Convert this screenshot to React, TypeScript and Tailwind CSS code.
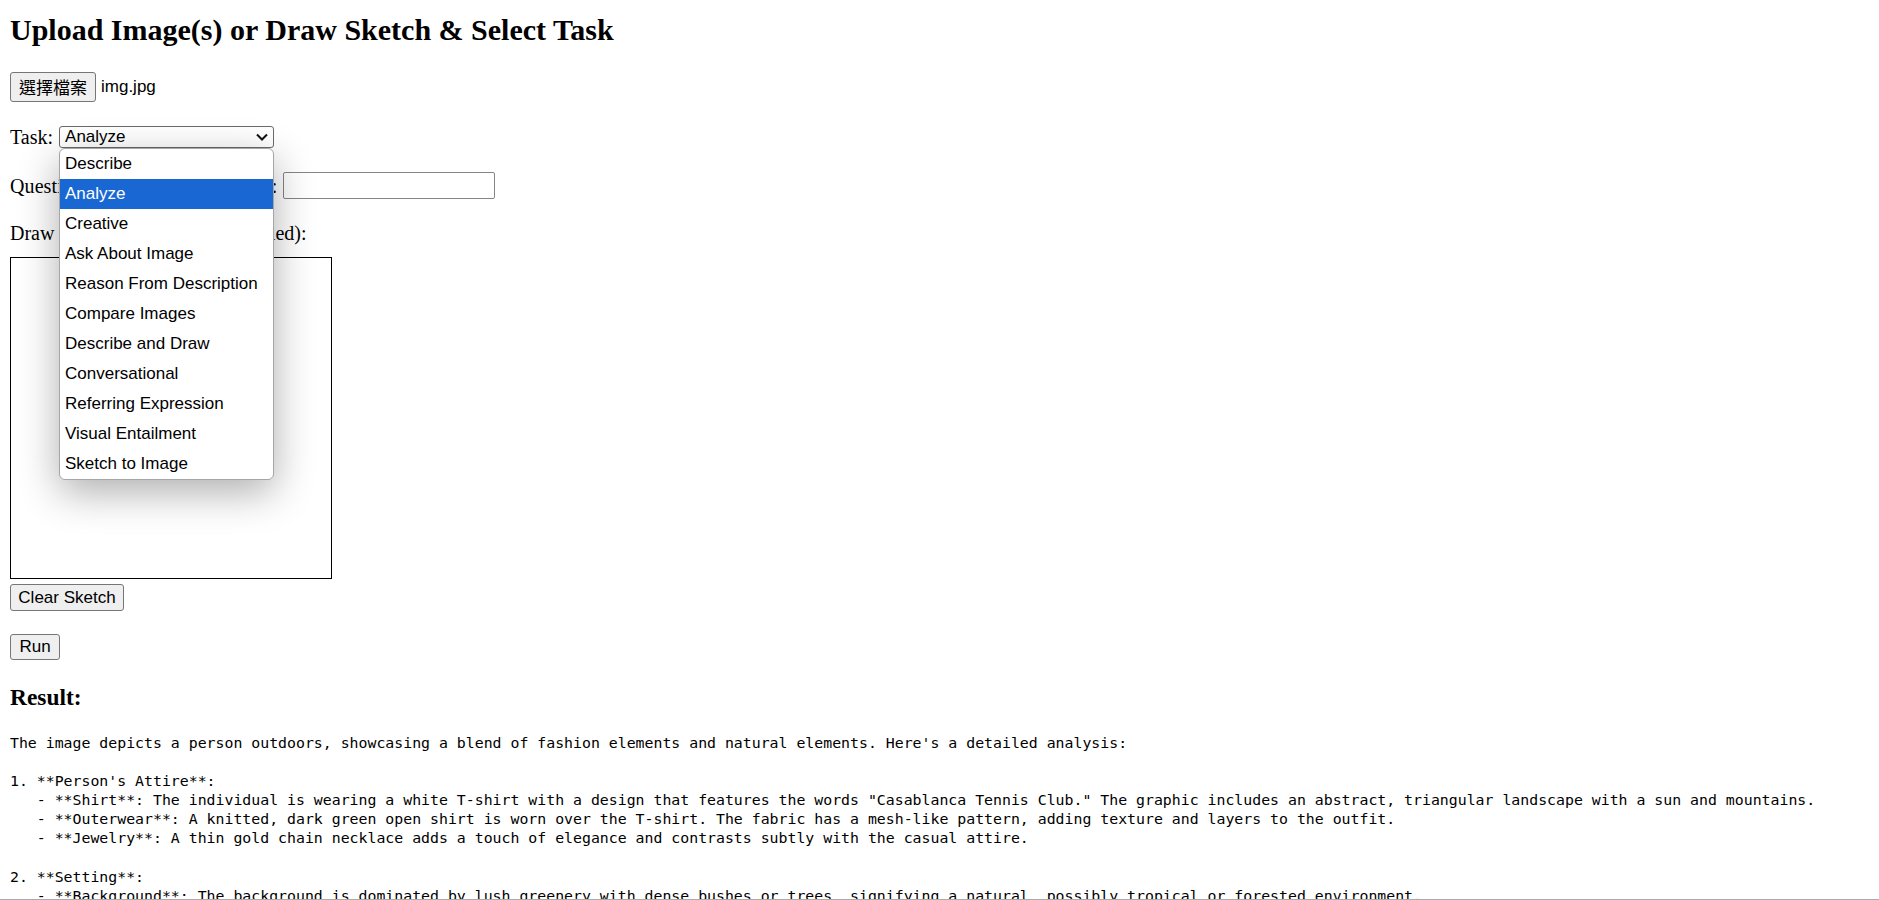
const taskOptions = [
  "Describe",
  "Analyze",
  "Creative",
  "Ask About Image",
  "Reason From Description",
  "Compare Images",
  "Describe and Draw",
  "Conversational",
  "Referring Expression",
  "Visual Entailment",
  "Sketch to Image",
];

const result = `The image depicts a person outdoors, showcasing a blend of fashion elements and natural elements. Here's a detailed analysis:

1. **Person's Attire**:
   - **Shirt**: The individual is wearing a white T-shirt with a design that features the words "Casablanca Tennis Club." The graphic includes an abstract, triangular landscape with a sun and mountains.
   - **Outerwear**: A knitted, dark green open shirt is worn over the T-shirt. The fabric has a mesh-like pattern, adding texture and layers to the outfit.
   - **Jewelry**: A thin gold chain necklace adds a touch of elegance and contrasts subtly with the casual attire.

2. **Setting**:
   - **Background**: The background is dominated by lush greenery with dense bushes or trees, signifying a natural, possibly tropical or forested environment.
   - **Lighting**: The lighting appears to be natural daylight, suggesting the photo was taken during the day.`;

const serif = "font-['Liberation_Serif','Times_New_Roman',serif]";
const sans = "font-['Liberation_Sans',Arial,sans-serif]";

function NativeButton({ label, width, height }: { label: string; width: string; height: string }) {
  return (
    <div
      className={`${width} ${height} flex items-center justify-center bg-[#efefef] border border-[#767676] rounded-[3px] text-[17px] text-black ${sans}`}
    >
      {label}
    </div>
  );
}

export default function App() {
  const selected = "Analyze";

  return (
    <div className={`relative h-[900px] overflow-hidden border-b border-[#ababab] bg-white px-[10px] text-black ${serif}`}>
      <h2 className="mt-[13px] text-[30px] leading-[34px] font-bold">
        Upload Image(s) or Draw Sketch &amp; Select Task
      </h2>

      <div className="mt-[25px] flex h-[30px] items-center gap-[5px]">
        <div className="flex h-[30px] w-[86px] items-center justify-center rounded-[3px] border border-[#767676] bg-[#efefef] text-[17px] font-['Noto_Sans_CJK_TC',sans-serif]">
          選擇檔案
        </div>
        <span className={`text-[17px] ${sans}`}>img.jpg</span>
      </div>

      <div className="mt-[24px] flex h-[22px] items-center">
        <span className="text-[20px] leading-[22px]">Task:</span>
        <div
          className={`ml-[6px] flex h-[22px] w-[215px] items-center justify-between rounded-[3px] border border-[#6b6b6b] pl-[5px] pr-[4px] text-[17px] ${sans}`}
        >
          <span>{selected}</span>
          <svg width="12" height="8" viewBox="0 0 12 8" className="mr-[1px]">
            <polyline points="1,1.5 6,6.5 11,1.5" fill="none" stroke="#111" strokeWidth="2" />
          </svg>
        </div>
      </div>

      <div className="mt-[24px] flex h-[27px] items-center gap-[5px]">
        <span className="text-[20px] leading-[22px] tracking-[0.1px]">Question (for Ask About Image):</span>
        <div className="h-[27px] w-[212px] rounded-[2px] border border-[#858585] bg-white" />
      </div>

      <p className="mt-[23px] text-[20px] leading-[22px]">Draw a Sketch (optional, if enabled):</p>

      <div className="mt-[13px] h-[322px] w-[322px] border border-black bg-white" />

      <div className="mt-[5px]">
        <NativeButton label="Clear Sketch" width="w-[114px]" height="h-[27px]" />
      </div>

      <div className="mt-[23px]">
        <NativeButton label="Run" width="w-[50px]" height="h-[26px]" />
      </div>

      <h3 className="mt-[23.6px] text-[23.4px] leading-[27px] font-bold">Result:</h3>

      <pre className="mt-[23.4px] whitespace-pre text-[14.85px] leading-[19.1px] font-['DejaVu_Sans_Mono',monospace]">
        {result}
      </pre>

      <div
        className={`absolute left-[59px] top-[148px] w-[215px] overflow-hidden rounded-[6px] border border-[#a6a6a6] bg-white shadow-[0_12px_40px_rgba(0,0,0,0.32)] ${sans}`}
      >
        {taskOptions.map((opt) => (
          <div
            key={opt}
            className={`flex h-[30px] items-center pl-[5px] text-[17px] ${
              opt === selected ? "bg-[#1967d2] text-white" : "text-black"
            }`}
          >
            {opt}
          </div>
        ))}
      </div>
    </div>
  );
}
